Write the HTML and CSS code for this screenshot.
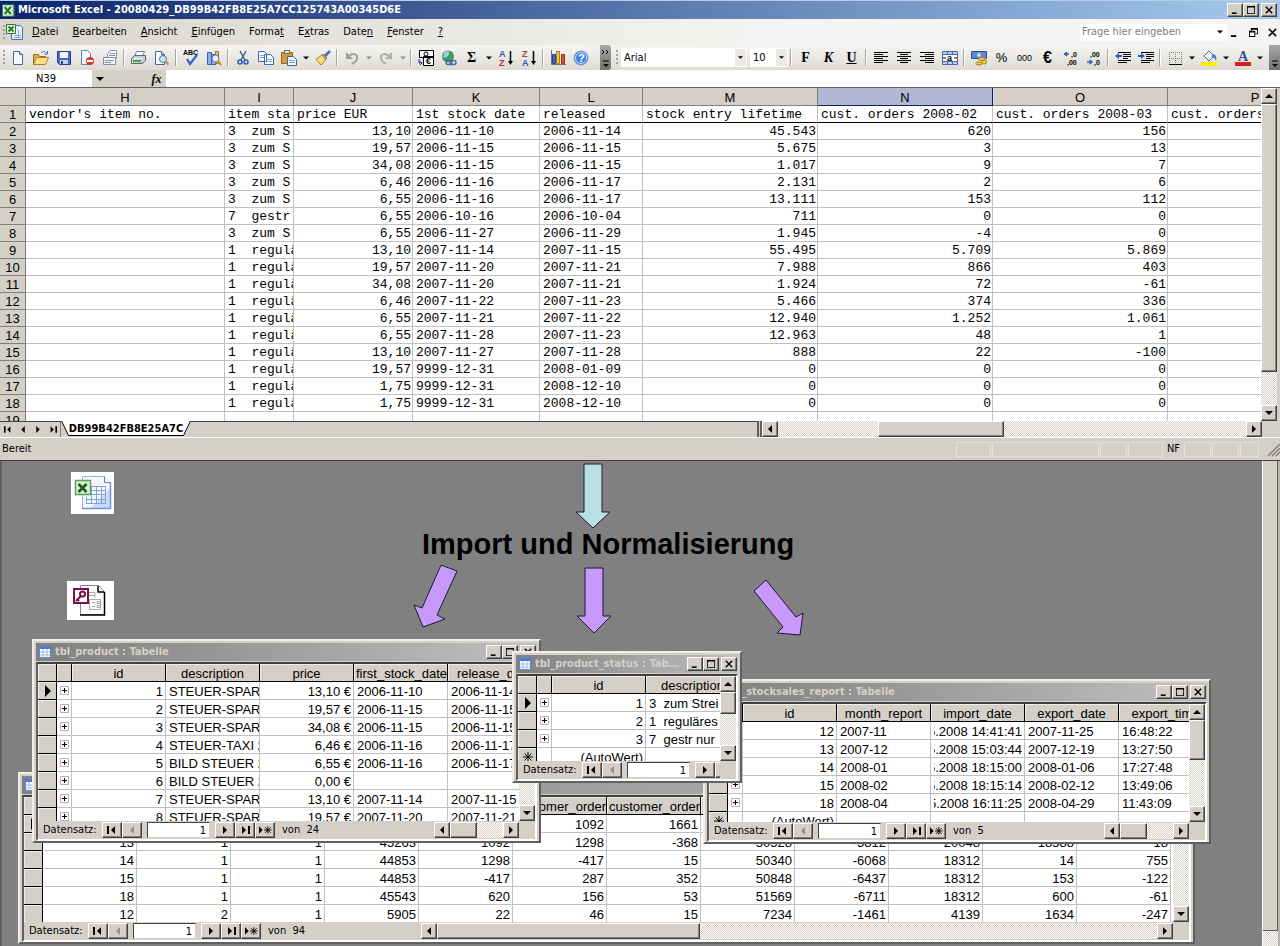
FILE: index.html
```html
<!DOCTYPE html>
<html lang="de">
<head>
<meta charset="utf-8">
<title>Microsoft Excel - 20080429_DB99B42FB8E25A7CC125743A00345D6E</title>
<link rel="stylesheet" href="styles.css">
</head>
<body>
<svg class="defs" aria-hidden="true">
  <symbol id="up" viewBox="0 0 8 8"><path d="M0 6h8L4 2z"/></symbol>
  <symbol id="down" viewBox="0 0 8 8"><path d="M0 2h8L4 6z"/></symbol>
  <symbol id="left" viewBox="0 0 8 8"><path d="M6 0v8L2 4z"/></symbol>
  <symbol id="right" viewBox="0 0 8 8"><path d="M2 0v8l4-4z"/></symbol>
  <symbol id="first" viewBox="0 0 10 8"><path d="M0 0h2v8H0zM8 0v8L4 4z"/></symbol>
  <symbol id="last" viewBox="0 0 10 8"><path d="M8 0h2v8H8zM2 0v8l4-4z"/></symbol>
  <symbol id="new" viewBox="0 0 14 8"><path d="M0 0v8l4-4z"/><path d="M9.500 0v8M5.500 4h8M6.500 1l6 6M12.500 1l-6 6" stroke="#000" fill="none"/></symbol>
  <symbol id="cur" viewBox="0 0 8 12"><path d="M1 0v12l6-6z"/></symbol>
  <symbol id="star" viewBox="0 0 10 10"><path d="M5 0v10M0 5h10M1.500 1.500l7 7M8.500 1.500l-7 7" stroke="#000" fill="none"/></symbol>
  <symbol id="min" viewBox="0 0 10 10"><path d="M1 8h6v2H1z"/></symbol>
  <symbol id="max" viewBox="0 0 10 10"><path d="M0 0h10v10H0zM1 2v7h8V2z" fill-rule="evenodd"/></symbol>
  <symbol id="restore" viewBox="0 0 10 10"><path d="M2 0h8v7H7v3H0V3h2zM3 2v1h4v3h2V2zM1 5v4h5V5z" fill-rule="evenodd"/></symbol>
  <symbol id="close" viewBox="0 0 10 10"><path d="M1 1l8 8M9 1l-8 8" stroke="#000" stroke-width="1.700"/></symbol>
  <symbol id="table" viewBox="0 0 12 12"><path fill="#fff" stroke="#5b84d0" d="M.5.5h11v11H.5z"/><path fill="#4c7be0" d="M0 0h12v3H0z"/><path d="M4 3v9M8 3v9M1 6h10M1 9h10" stroke="#9db9ea"/></symbol>
  <symbol id="plus" viewBox="0 0 9 9"><path fill="#fff" stroke="#b4b4b4" d="M.5.5h8v8h-8z"/><path d="M4.500 2v5M2 4.500h5" stroke="#000"/></symbol>
  <symbol id="xl" viewBox="0 0 16 16"><path fill="#e6f3e2" stroke="#2d7a33" d="M.5 1.500h13v13H.5z"/><path d="M3 4l7 8M10 4l-7 8" stroke="#1d7a2a" stroke-width="2.400"/><path d="M11 4h4M11 8h4M11 12h4" stroke="#79a87c"/></symbol>
  <symbol id="page" viewBox="0 0 16 16"><path fill="#f4f8ff" stroke="#4a6a94" d="M3.500 1.500h6l3 3v10h-9z"/><path fill="#c4d7f0" stroke="#4a6a94" d="M9.500 1.500v3h3"/></symbol>
</svg>

<main class="page">
<section class="excel">
  <header class="titlebar">
    <svg width="14" height="15"><use href="#xl"/></svg>
    <span class="title">Microsoft Excel - 20080429_DB99B42FB8E25A7CC125743A00345D6E</span>
    <div class="winbtns"><button class="raised" aria-label="Minimieren"><svg><use href="#min"/></svg></button><button class="raised" aria-label="Maximieren"><svg><use href="#max"/></svg></button><button class="raised" aria-label="Schließen"><svg><use href="#close"/></svg></button></div>
  </header>

  <nav class="menubar">
    <span class="grip"></span>
    <svg class="menu-icon" width="18" height="17" viewBox="0 0 18 17"><path fill="#e9f1ff" stroke="#4a6fb0" d="M5.500 1.500h9l2 2v12h-11z"/><path d="M8 11.500h7M8 13.500h7M12.500 6v8" stroke="#86a5d8"/><path fill="#e6f3e2" stroke="#2d7a33" d="M.5.5h9v9h-9z"/><path d="M2.500 2.500l5 5M7.500 2.500l-5 5" stroke="#1d7a2a" stroke-width="1.800"/></svg>
    <button><u>D</u>atei</button><button><u>B</u>earbeiten</button><button><u>A</u>nsicht</button><button><u>E</u>infügen</button><button>Forma<u>t</u></button><button>E<u>x</u>tras</button><button>Date<u>n</u></button><button><u>F</u>enster</button><button><u>?</u></button>
    <div class="ask"><input type="text" placeholder="Frage hier eingeben" aria-label="Frage hier eingeben"><svg><use href="#down"/></svg></div>
    <div class="docbtns"><button aria-label="Mappe minimieren"><svg><use href="#min"/></svg></button><button aria-label="Mappe wiederherstellen"><svg><use href="#restore"/></svg></button><button aria-label="Mappe schließen"><svg><use href="#close"/></svg></button></div>
  </nav>

  <div class="toolbar" role="toolbar" aria-label="Standard und Format">
    <span class="grip"></span>
    <button aria-label="Neu"><svg viewBox="0 0 16 16"><use href="#page"/></svg></button>
    <button aria-label="Öffnen"><svg viewBox="0 0 16 16"><path fill="#e8b23c" stroke="#9a6d14" d="M.5 14.500v-10h5l1 2h6v2"/><path fill="#ffe08a" stroke="#b07f1c" d="M.5 14.500l3-7h12l-3 7z"/><path d="M8 3c2-2 4-2 5 0M14.500 1v3h-3" fill="none" stroke="#3c68b0"/></svg></button>
    <button aria-label="Speichern"><svg viewBox="0 0 16 16"><path fill="#4b68c8" stroke="#27408f" d="M1.500 1.500h13v13h-11l-2-2z"/><path fill="#f4f6ff" d="M4 2h8v6H4z"/><path fill="#c9d0e8" d="M4 10h8v4H4z"/><path fill="#27408f" d="M5 11h2v3H5z"/></svg></button>
    <button aria-label="Berechtigung"><svg viewBox="0 0 16 16"><path fill="#f4f8ff" stroke="#6b7f9e" d="M2.500.5h6l3 3v11h-9z"/><circle cx="11" cy="11" r="4" fill="#d63a24"/><path fill="#fff" d="M8 10h6v2H8z"/></svg></button>
    <button aria-label="E-Mail"><svg viewBox="0 0 16 16"><path fill="#fff" stroke="#8090a8" d="M5.500 4.500l3-4h6v8h-9z"/><path fill="#f2f4f8" stroke="#8090a8" d="M1.500 7.500h12v7h-12z"/><path d="M8 3.500h5M7 5.500h6M3 10.500h9M3 12.500h6" stroke="#8090a8" fill="none"/></svg></button>
    <i class="sep"></i>
    <button aria-label="Drucken"><svg viewBox="0 0 16 16"><path fill="#fff" stroke="#6b7f9e" d="M5.500 1.500h8l-2 5h-8z"/><path fill="#c6ceda" stroke="#56657c" d="M.5 8.500l3-3h11v5l-3 3H.5z"/><path fill="#4faf4a" d="M2 10h8v2H2z"/><path fill="#eef2f8" d="M3 8h9v1H3z"/></svg></button>
    <button aria-label="Seitenansicht"><svg viewBox="0 0 16 16"><use href="#page" x="-2"/><circle cx="9" cy="9" r="3.500" fill="#cfe4fa" stroke="#55749e"/><path d="M11.500 11.500l3 3" stroke="#c48a2c" stroke-width="2"/></svg></button>
    <i class="sep"></i>
    <button aria-label="Rechtschreibung"><svg viewBox="0 0 16 16"><text x="0" y="5" class="t7">ABC</text><path d="M4 9l3 5 7-9" fill="none" stroke="#3567c6" stroke-width="2.200"/></svg></button>
    <button aria-label="Recherchieren"><svg viewBox="0 0 16 16"><path fill="#8eaee6" stroke="#3c5ea8" d="M1.500 2.500h4v12h-4zM5.500 4.500h4v10h-4z"/><path fill="#e4c06c" stroke="#9a7420" d="M9.500 1.500h3v12h-3z"/><circle cx="9.500" cy="8.500" r="3.500" fill="#e3efff" stroke="#55749e"/><path d="M12 11l3 4" stroke="#c48a2c" stroke-width="2"/></svg></button>
    <i class="sep"></i>
    <button aria-label="Ausschneiden"><svg viewBox="0 0 16 16"><path d="M5 1l5 9M11 1l-5 9" stroke="#44608e" stroke-width="1.500"/><circle cx="5" cy="12" r="2" fill="none" stroke="#2c5cb8" stroke-width="1.600"/><circle cx="11" cy="12" r="2" fill="none" stroke="#2c5cb8" stroke-width="1.600"/></svg></button>
    <button aria-label="Kopieren"><svg viewBox="0 0 16 16"><path fill="#f4f8ff" stroke="#3f66ae" d="M.5 1.500h6l2 2v8h-8zM6.500 4.500h6l3 3v7h-9z"/><path d="M2 5.500h4M2 7.500h4M8 9.500h6M8 11.500h6" stroke="#7f9fd6"/></svg></button>
    <button aria-label="Einfügen"><svg viewBox="0 0 16 16"><path fill="#d99a36" stroke="#94631a" d="M.5 2.500h11v11H.5z"/><path fill="#e4e4e4" stroke="#6a6a6a" d="M3.500.5h5v3h-5z"/><path fill="#f4f8ff" stroke="#3f66ae" d="M6.500 6.500h6l3 3v6h-9z"/><path d="M8 10.500h6M8 12.500h6" stroke="#7f9fd6"/></svg></button>
    <button class="drop" aria-label="Einfügeoptionen"><svg><use href="#down"/></svg></button>
    <button aria-label="Format übertragen"><svg viewBox="0 0 16 16"><path d="M15 1l-5 5" stroke="#4c6fb4" stroke-width="2.600"/><path fill="#a9a9c4" stroke="#6a6a8c" d="M8 4l4 4-2 1-3-3z"/><path fill="#f6dc7c" stroke="#a98a2c" d="M7 5l4 5-5 5-5-6z"/></svg></button>
    <i class="sep"></i>
    <button aria-label="Rückgängig"><svg viewBox="0 0 16 16"><path d="M4 7c4-5 10-3 9 1 0 3-2 4-5 6" fill="none" stroke="#a0a0a0" stroke-width="2"/><path fill="#a0a0a0" d="M2 2v7h7z"/></svg></button>
    <button class="drop dim" aria-label="Rückgängig-Liste"><svg><use href="#down"/></svg></button>
    <button aria-label="Wiederholen"><svg viewBox="0 0 16 16"><path d="M12 7c-4-5-10-3-9 1 0 3 2 4 5 6" fill="none" stroke="#b0b0b0" stroke-width="2"/><path fill="#b0b0b0" d="M14 2v7H7z"/></svg></button>
    <button class="drop dim" aria-label="Wiederholen-Liste"><svg><use href="#down"/></svg></button>
    <i class="sep"></i>
    <button aria-label="Euro umrechnen"><svg viewBox="0 0 16 16"><path fill="#fff" stroke="#000" d="M1.500.5h14v7h-14zM5.500 6.500h10v9h-10z"/><circle cx="8" cy="4" r="2" fill="none" stroke="#000"/><text x="8" y="14" class="t9">€</text><path d="M1 9v4h3M2 11l2 2-2 2" fill="none" stroke="#1c2fa0"/></svg></button>
    <button aria-label="Hyperlink"><svg viewBox="0 0 16 16"><circle cx="7" cy="6.500" r="6" fill="#3f9c5c"/><path fill="#8fd0e8" d="M3 3c3-3 6-2 5 1S4 8 2 8z"/><path d="M5 12.500a2 2 0 0 1 2-2h2a2 2 0 0 1 0 4H7a2 2 0 0 1-2-2zM9 12.500a2 2 0 0 1 2-2h2a2 2 0 0 1 0 4h-2a2 2 0 0 1-2-2z" fill="none" stroke="#4668a8" stroke-width="1.400"/></svg></button>
    <button class="serif" aria-label="AutoSumme">Σ</button>
    <button class="drop" aria-label="Summenoptionen"><svg><use href="#down"/></svg></button>
    <button aria-label="Aufsteigend sortieren"><svg viewBox="0 0 16 16"><text x="1" y="7" class="t9" fill="#2c5cb8">A</text><text x="1" y="16" class="t9" fill="#b03a2c">Z</text><path d="M12.500 1v12" stroke="#000" stroke-width="1.500"/><path d="M10 11h5l-2.500 4z"/></svg></button>
    <button aria-label="Absteigend sortieren"><svg viewBox="0 0 16 16"><text x="1" y="7" class="t9" fill="#b03a2c">Z</text><text x="1" y="16" class="t9" fill="#2c5cb8">A</text><path d="M12.500 1v12" stroke="#000" stroke-width="1.500"/><path d="M10 11h5l-2.500 4z"/></svg></button>
    <i class="sep"></i>
    <button aria-label="Diagramm"><svg viewBox="0 0 16 16"><path d="M1.500 0v14.500H16" fill="none" stroke="#707070"/><path fill="#3c6ed0" stroke="#27408f" d="M2.500 4.500h3v9h-3z"/><path fill="#f4c63c" stroke="#a97c14" d="M6.500 1.500h3v12h-3z"/><path fill="#e0502c" stroke="#94301a" d="M11.500 4.500h3v9h-3z"/></svg></button>
    <button aria-label="Hilfe"><svg viewBox="0 0 16 16"><circle cx="8" cy="8" r="7" fill="#3f7fe0" stroke="#7f9fd6"/><circle cx="8" cy="8" r="5.500" fill="none" stroke="#cfe0fa"/><text x="5" y="12" class="t11" fill="#fff">?</text></svg></button>
    <button class="cap" aria-label="Symbolleistenoptionen"><svg viewBox="0 0 11 25"><path d="M2 5l2 2-2 2M6 5l2 2-2 2M3 16h6" stroke="#000" fill="none"/><path d="M3 19h6l-3 3z"/></svg></button>
    <span class="grip"></span>
    <label class="combo font"><select aria-label="Schriftart"><option>Arial</option></select><svg><use href="#down"/></svg></label>
    <label class="combo size"><select aria-label="Schriftgrad"><option>10</option></select><svg><use href="#down"/></svg></label>
    <i class="sep"></i>
    <button class="serif" aria-label="Fett">F</button>
    <button class="serif" aria-label="Kursiv"><em>K</em></button>
    <button class="serif" aria-label="Unterstrichen"><u>U</u></button>
    <i class="sep"></i>
    <button aria-label="Linksbündig"><svg viewBox="0 0 16 16"><path d="M1 2.500h14M1 4.500h9M1 6.500h14M1 8.500h9M1 10.500h14M1 12.500h9" stroke="#000"/></svg></button>
    <button aria-label="Zentriert"><svg viewBox="0 0 16 16"><path d="M1 2.500h14M4 4.500h8M1 6.500h14M4 8.500h8M1 10.500h14M4 12.500h8" stroke="#000"/></svg></button>
    <button aria-label="Rechtsbündig"><svg viewBox="0 0 16 16"><path d="M1 2.500h14M6 4.500h9M1 6.500h14M6 8.500h9M1 10.500h14M6 12.500h9" stroke="#000"/></svg></button>
    <button aria-label="Verbinden und zentrieren"><svg viewBox="0 0 16 16"><path fill="#bcd0f0" stroke="#4668a8" d="M.5 1.500h15v13H.5z"/><path d="M5.500 1v4M10.500 1v4M5.500 11v4M10.500 11v4" stroke="#4668a8"/><path fill="#fff" stroke="#4668a8" d="M.5 4.500h15v7H.5z"/><text x="5" y="11" class="t9">a</text><path d="M1 8h3M12 8h3" stroke="#000"/></svg></button>
    <i class="sep"></i>
    <button aria-label="Währung"><svg viewBox="0 0 16 16"><path fill="#5f86d8" stroke="#2c4c9c" d="M.5 1.500h15v7H.5z"/><circle cx="8" cy="5" r="2" fill="#c8daf8"/><ellipse cx="11" cy="9" rx="3.500" ry="1.500" fill="#f6d05c" stroke="#a97c14"/><ellipse cx="13" cy="12" rx="2.500" ry="2" fill="#f6d05c" stroke="#a97c14"/><ellipse cx="8" cy="13.500" rx="3" ry="1.500" fill="#f6d05c" stroke="#a97c14"/></svg></button>
    <button class="percent" aria-label="Prozent">%</button>
    <button class="zeros" aria-label="Tausendertrennzeichen">000</button>
    <button class="euro" aria-label="Euro">€</button>
    <button aria-label="Dezimalstelle hinzufügen"><svg viewBox="0 0 16 16"><path d="M1 4h5M4 2L1.500 4 4 6" fill="none" stroke="#2c5cb8" stroke-width="1.300"/><text x="8" y="7" class="t8">,0</text><text x="4" y="15" class="t8">,00</text></svg></button>
    <button aria-label="Dezimalstelle löschen"><svg viewBox="0 0 16 16"><text x="4" y="7" class="t8">,00</text><path d="M1 12h5M3.500 10L6 12l-2.500 2" fill="none" stroke="#2c5cb8" stroke-width="1.300"/><text x="8" y="15" class="t8">,0</text></svg></button>
    <i class="sep"></i>
    <button aria-label="Einzug verkleinern"><svg viewBox="0 0 16 16"><path d="M3 2.500h13M8 4.500h8M8 6.500h8M8 8.500h5M3 10.500h13M3 12.500h9" stroke="#000"/><path fill="#2c5cb8" d="M0 6l4-3v2h3v2H4v2z"/></svg></button>
    <button aria-label="Einzug vergrößern"><svg viewBox="0 0 16 16"><path d="M3 2.500h13M8 4.500h8M8 6.500h8M8 8.500h5M3 10.500h13M3 12.500h9" stroke="#000"/><path fill="#2c5cb8" d="M7 6L3 3v2H0v2h3v2z"/></svg></button>
    <i class="sep"></i>
    <button aria-label="Rahmen"><svg viewBox="0 0 16 16"><path d="M2.500 2v12M8.500 2v12M14.500 2v12M2 2.500h13M2 8.500h13" stroke="#777" stroke-dasharray="1 1"/><path d="M2 14.500h13" stroke="#000"/></svg></button>
    <button class="drop" aria-label="Rahmenoptionen"><svg><use href="#down"/></svg></button>
    <button aria-label="Füllfarbe"><svg viewBox="0 0 16 16"><path fill="#f0f4fc" stroke="#56657c" d="M3 6l5-5 5 5-5 5z"/><path fill="#4c7bd0" d="M11 4c4 0 5 3 4 7-1-3-2-3-4-4z"/><path fill="#f8f000" d="M0 12h16v4H0z"/></svg></button>
    <button class="drop" aria-label="Füllfarbenpalette"><svg><use href="#down"/></svg></button>
    <button aria-label="Schriftfarbe"><svg viewBox="0 0 16 16"><text x="3" y="11" class="t14" fill="#2c4c9c">A</text><path fill="#e01818" d="M0 12h16v4H0z"/></svg></button>
    <button class="drop" aria-label="Schriftfarbenpalette"><svg><use href="#down"/></svg></button>
    <button class="cap end" aria-label="Weitere Schaltflächen"><svg viewBox="0 0 11 25"><path d="M3 16h6" stroke="#000"/><path d="M3 19h6l-3 3z"/></svg></button>
  </div>

  <div class="formulabar">
    <input class="namebox" type="text" value="N39" aria-label="Namenfeld">
    <svg><use href="#down"/></svg>
    <em class="fx">fx</em>
    <input class="formula" type="text" aria-label="Bearbeitungsleiste">
  </div>

  <div class="sheet">
    <div class="grid">
      <table>
        <colgroup><col class="w26"><col class="w199"><col class="w69"><col class="w119"><col class="w127"><col class="w103"><col class="w175"><col class="w175"><col class="w175"><col class="w175"></colgroup>
        <thead><tr><th><th>H<th>I<th>J<th>K<th>L<th>M<th class="sel">N<th>O<th>P</tr></thead>
        <tbody>
        <tr class="names"><th>1<td>vendor's item no.<td>item sta<td>price EUR<td>1st stock date<td>released<td>stock entry lifetime<td>cust. orders 2008-02<td>cust. orders 2008-03<td>cust. orders</tr>
        <tr><th>2<td><td>3  zum S<td>13,10<td>2006-11-10<td>2006-11-14<td>45.543<td>620<td>156<td></tr>
        <tr><th>3<td><td>3  zum S<td>19,57<td>2006-11-15<td>2006-11-15<td>5.675<td>3<td>13<td></tr>
        <tr><th>4<td><td>3  zum S<td>34,08<td>2006-11-15<td>2006-11-15<td>1.017<td>9<td>7<td></tr>
        <tr><th>5<td><td>3  zum S<td>6,46<td>2006-11-16<td>2006-11-17<td>2.131<td>2<td>6<td></tr>
        <tr><th>6<td><td>3  zum S<td>6,55<td>2006-11-16<td>2006-11-17<td>13.111<td>153<td>112<td></tr>
        <tr><th>7<td><td>7  gestr<td>6,55<td>2006-10-16<td>2006-10-04<td>711<td>0<td>0<td></tr>
        <tr><th>8<td><td>3  zum S<td>6,55<td>2006-11-27<td>2006-11-29<td>1.945<td>-4<td>0<td></tr>
        <tr><th>9<td><td>1  regulä<td>13,10<td>2007-11-14<td>2007-11-15<td>55.495<td>5.709<td>5.869<td></tr>
        <tr><th>10<td><td>1  regulä<td>19,57<td>2007-11-20<td>2007-11-21<td>7.988<td>866<td>403<td></tr>
        <tr><th>11<td><td>1  regulä<td>34,08<td>2007-11-20<td>2007-11-21<td>1.924<td>72<td>-61<td></tr>
        <tr><th>12<td><td>1  regulä<td>6,46<td>2007-11-22<td>2007-11-23<td>5.466<td>374<td>336<td></tr>
        <tr><th>13<td><td>1  regulä<td>6,55<td>2007-11-21<td>2007-11-22<td>12.940<td>1.252<td>1.061<td></tr>
        <tr><th>14<td><td>1  regulä<td>6,55<td>2007-11-28<td>2007-11-23<td>12.963<td>48<td>1<td></tr>
        <tr><th>15<td><td>1  regulä<td>13,10<td>2007-11-27<td>2007-11-28<td>888<td>22<td>-100<td></tr>
        <tr><th>16<td><td>1  regulä<td>19,57<td>9999-12-31<td>2008-01-09<td>0<td>0<td>0<td></tr>
        <tr><th>17<td><td>1  regulä<td>1,75<td>9999-12-31<td>2008-12-10<td>0<td>0<td>0<td></tr>
        <tr><th>18<td><td>1  regulä<td>1,75<td>9999-12-31<td>2008-12-10<td>0<td>0<td>0<td></tr>
        <tr><th>19<td><td><td><td><td><td><td><td><td><td></tr>
        </tbody>
      </table>
    </div>
    <div class="vscroll"><button class="raised" aria-label="Nach oben"><svg><use href="#up"/></svg></button><div class="track"><div class="raised thumb-v268"></div></div><button class="raised" aria-label="Nach unten"><svg><use href="#down"/></svg></button></div>
  </div>

  <div class="tabbar">
    <div class="tabnav"><button aria-label="Erstes Blatt"><svg><use href="#first"/></svg></button><button aria-label="Voriges Blatt"><svg><use href="#left"/></svg></button><button aria-label="Nächstes Blatt"><svg><use href="#right"/></svg></button><button aria-label="Letztes Blatt"><svg><use href="#last"/></svg></button></div>
    <button class="tab"><svg viewBox="0 0 130 16" preserveAspectRatio="none"><path fill="#fff" d="M0 0h130l-7 14H7z"/><path d="M.5 0l7 14.500h115L129.500 0" fill="none" stroke="#000"/></svg><span>DB99B42FB8E25A7C</span></button>
    <div class="tabrest"></div>
    <div class="hscroll sheetscroll"><button class="raised" aria-label="Nach links"><svg><use href="#left"/></svg></button><div class="track"><div class="raised thumb-sheet"></div></div><button class="raised" aria-label="Nach rechts"><svg><use href="#right"/></svg></button></div>
  </div>

  <footer class="status"><span class="ready">Bereit</span><span class="pane w35"></span><span class="pane w107"></span><span class="pane w27"></span><span class="pane w35"></span><span class="pane plain">NF</span><span class="pane w27"></span><span class="pane w27"></span><span class="pane w19"></span>
    <svg width="14" height="16" viewBox="0 0 14 16"><path d="M2 15L14 3M6 15l8-8M10 15l4-4" stroke="#808080" stroke-width="1.500"/></svg></footer>
</section>

<section class="desk">
  <div class="canvas">
    <h1>Import und Normalisierung</h1>
    <svg class="arrows" viewBox="410 461 400 180" stroke="#201830"><path fill="#b9e0e4" d="M584 464h18v48h8l-17 16-17-16h8z"/><g fill="#c799fb"><path d="M585 568h18v48h8l-17 17-17-17h8z"/><path d="M441 565l16 6-20 44 8 4-22 8-9-22 8 3z"/><path d="M766 580l30 37 7-4-3 22-23-2 6-6-29-36z"/></g></svg>
    <svg class="tile xl-tile" viewBox="0 0 43 42"><path fill="#fff" d="M0 0h43v42H0z"/><path fill="#f3f8ff" stroke="#9db2d4" d="M11.500 4.500h22l6 6v26h-28z"/><path fill="#c4dafa" d="M20 36h19V16z"/><path fill="#fff" stroke="#5f7fb4" d="M33.500 4.500v6h6"/><path d="M11 36.500h28.500V11" stroke="#6f92cc" stroke-width="1.500" fill="none"/><path d="M20 14.500h14M20 18.500h14M20 22.500h14M15 27.500h19M15 31.500h19M20.500 14v18M25.500 14v18M30.500 14v18M34.500 14v18M15.500 25v7" stroke="#86a3d0" fill="none"/><path fill="#d8f0d0" stroke="#5fa05c" stroke-width="1.500" d="M4.500 8.500h15v14h-15z"/><path d="M7.500 12l8 8M15.500 12l-8 8" stroke="#1d5a2a" stroke-width="2.600"/></svg>
    <svg class="tile ac-tile" viewBox="0 0 47 39"><path fill="#fff" d="M0 0h47v39H0z"/><path fill="#fff" stroke="#888" d="M13.500 4.500h18l6 6v23h-24z"/><path fill="none" stroke="#000" stroke-width="1.500" d="M31 5v6h6M37.500 11v23H13"/><path d="M21 11.500h7v5M21 14.500h7M22.500 18.500h11v10h-11zM25 21.500h3M30 20.500h3v2h-3zM25 25.500h3M30 24.500h3v2h-3z" fill="none" stroke="#aaa"/><path fill="#fff" stroke="#7a0f4c" stroke-width="2" d="M7 8h14v14H7z"/><circle cx="15.500" cy="13" r="2.500" fill="#fff" stroke="#7a0f4c" stroke-width="2"/><path d="M14 15l-5 5M10 18l2 2" stroke="#7a0f4c" stroke-width="2"/></svg>

    <section class="win win-stock">
      <header><svg><use href="#table"/></svg></header>
      <div class="body">
        <div class="data"><div class="clip"><table class="num">
          <colgroup><col class="w19"><col class="w94"><col class="w94"><col class="w94"><col class="w94"><col class="w94"><col class="w94"><col class="w94"><col class="w94"><col class="w94"><col class="w94"><col class="w94"><col class="w94"></colgroup>
          <thead><tr><th><th><th><th><th><th><th class="lead">customer_orders<th class="lead">customer_orders<th><th><th><th><th></tr></thead>
          <tbody>
          <tr><th><svg class="cur"><use href="#cur"/></svg><td><td><td><td><td><td>1092<td>1661<td><td><td><td><td></tr>
          <tr><th><td>13<td>1<td>1<td>45263<td>1092<td>1298<td>-368<td>50528<td>-5812<td>20048<td>18588<td>18</tr>
          <tr><th><td>14<td>1<td>1<td>44853<td>1298<td>-417<td>15<td>50340<td>-6068<td>18312<td>14<td>755</tr>
          <tr><th><td>15<td>1<td>1<td>44853<td>-417<td>287<td>352<td>50848<td>-6437<td>18312<td>153<td>-122</tr>
          <tr><th><td>18<td>1<td>1<td>45543<td>620<td>156<td>53<td>51569<td>-6711<td>18312<td>600<td>-61</tr>
          <tr><th><td>12<td>2<td>1<td>5905<td>22<td>46<td>15<td>7234<td>-1461<td>4139<td>1634<td>-247</tr>
          </tbody></table></div>
          <div class="vscroll"><button class="raised" aria-label="Nach oben"><svg><use href="#up"/></svg></button><div class="track"></div><button class="raised" aria-label="Nach unten"><svg><use href="#down"/></svg></button></div></div>
        <div class="recbar"><div class="nav"><label for="r1">Datensatz:</label><button class="raised" aria-label="Erster"><svg><use href="#first"/></svg></button><button class="raised dim" aria-label="Voriger"><svg><use href="#left"/></svg></button><input id="r1" type="text" value="1"><button class="raised" aria-label="Nächster"><svg><use href="#right"/></svg></button><button class="raised" aria-label="Letzter"><svg><use href="#last"/></svg></button><button class="raised" aria-label="Neu"><svg class="wide"><use href="#new"/></svg></button><span>von  94</span></div>
          <div class="hscroll long"><button class="raised" aria-label="Nach links"><svg><use href="#left"/></svg></button><div class="track"><div class="raised thumb-long"></div></div><button class="raised" aria-label="Nach rechts"><svg><use href="#right"/></svg></button></div></div>
      </div>
    </section>

    <section class="win win-report">
      <header><svg><use href="#table"/></svg><span>tbl_stocksales_report : Tabelle</span><div class="winbtns"><button class="raised" aria-label="Minimieren"><svg><use href="#min"/></svg></button><button class="raised" aria-label="Maximieren"><svg><use href="#max"/></svg></button><button class="raised" aria-label="Schließen"><svg><use href="#close"/></svg></button></div></header>
      <div class="body">
        <div class="data"><div class="clip"><table>
          <colgroup><col class="w19"><col class="w15"><col class="w94"><col class="w94"><col class="w94"><col class="w94"><col class="w94"></colgroup>
          <thead><tr><th><th><th>id<th>month_report<th>import_date<th>export_date<th>export_time</tr></thead>
          <tbody>
          <tr><th><td><svg class="plus"><use href="#plus"/></svg><td class="r">12<td>2007-11<td><div class="tail">05.05.2008 14:41:41</div><td>2007-11-25<td>16:48:22</tr>
          <tr><th><td><svg class="plus"><use href="#plus"/></svg><td class="r">13<td>2007-12<td><div class="tail">05.05.2008 15:03:44</div><td>2007-12-19<td>13:27:50</tr>
          <tr><th><td><svg class="plus"><use href="#plus"/></svg><td class="r">14<td>2008-01<td><div class="tail">05.05.2008 18:15:00</div><td>2008-01-06<td>17:27:48</tr>
          <tr><th><td><svg class="plus"><use href="#plus"/></svg><td class="r">15<td>2008-02<td><div class="tail">05.05.2008 18:15:14</div><td>2008-02-12<td>13:49:06</tr>
          <tr><th><td><svg class="plus"><use href="#plus"/></svg><td class="r">18<td>2008-04<td><div class="tail">05.05.2008 16:11:25</div><td>2008-04-29<td>11:43:09</tr>
          <tr><th><svg class="star"><use href="#star"/></svg><td><td class="r">(AutoWert)<td><td><td><td></tr>
          </tbody></table></div>
          <div class="vscroll"><button class="raised" aria-label="Nach oben"><svg><use href="#up"/></svg></button><div class="track"><div class="raised thumb-v40"></div></div><button class="raised" aria-label="Nach unten"><svg><use href="#down"/></svg></button></div></div>
        <div class="recbar"><div class="nav"><label for="r2">Datensatz:</label><button class="raised" aria-label="Erster"><svg><use href="#first"/></svg></button><button class="raised dim" aria-label="Voriger"><svg><use href="#left"/></svg></button><input id="r2" type="text" value="1"><button class="raised" aria-label="Nächster"><svg><use href="#right"/></svg></button><button class="raised" aria-label="Letzter"><svg><use href="#last"/></svg></button><button class="raised" aria-label="Neu"><svg class="wide"><use href="#new"/></svg></button><span>von  5</span></div>
          <div class="hscroll short"><button class="raised" aria-label="Nach links"><svg><use href="#left"/></svg></button><div class="track"><div class="raised thumb-short"></div></div><button class="raised" aria-label="Nach rechts"><svg><use href="#right"/></svg></button></div></div>
      </div>
    </section>

    <section class="win win-product">
      <header><svg><use href="#table"/></svg><span>tbl_product : Tabelle</span><div class="winbtns"><button class="raised" aria-label="Minimieren"><svg><use href="#min"/></svg></button><button class="raised" aria-label="Maximieren"><svg><use href="#max"/></svg></button><button class="raised" aria-label="Schließen"><svg><use href="#close"/></svg></button></div></header>
      <div class="body">
        <div class="data"><div class="clip"><table>
          <colgroup><col class="w19"><col class="w15"><col class="w94"><col class="w94"><col class="w94"><col class="w94"><col class="w94"></colgroup>
          <thead><tr><th><th><th>id<th>description<th>price<th class="lead">first_stock_date<th>release_date</tr></thead>
          <tbody>
          <tr><th><svg class="cur"><use href="#cur"/></svg><td><svg class="plus"><use href="#plus"/></svg><td class="r">1<td>STEUER-SPAR<td class="r">13,10 €<td>2006-11-10<td>2006-11-14</tr>
          <tr><th><td><svg class="plus"><use href="#plus"/></svg><td class="r">2<td>STEUER-SPAR<td class="r">19,57 €<td>2006-11-15<td>2006-11-15</tr>
          <tr><th><td><svg class="plus"><use href="#plus"/></svg><td class="r">3<td>STEUER-SPAR<td class="r">34,08 €<td>2006-11-15<td>2006-11-15</tr>
          <tr><th><td><svg class="plus"><use href="#plus"/></svg><td class="r">4<td>STEUER-TAXI 2<td class="r">6,46 €<td>2006-11-16<td>2006-11-17</tr>
          <tr><th><td><svg class="plus"><use href="#plus"/></svg><td class="r">5<td>BILD STEUER 2<td class="r">6,55 €<td>2006-11-16<td>2006-11-17</tr>
          <tr><th><td><svg class="plus"><use href="#plus"/></svg><td class="r">6<td>BILD STEUER 2<td class="r">0,00 €<td><td></tr>
          <tr><th><td><svg class="plus"><use href="#plus"/></svg><td class="r">7<td>STEUER-SPAR<td class="r">13,10 €<td>2007-11-14<td>2007-11-15</tr>
          <tr><th><td><svg class="plus"><use href="#plus"/></svg><td class="r">8<td>STEUER-SPAR<td class="r">19,57 €<td>2007-11-20<td>2007-11-21</tr>
          </tbody></table></div>
          <div class="vscroll"><button class="raised" aria-label="Nach oben"><svg><use href="#up"/></svg></button><div class="track"><div class="raised thumb-v40"></div></div><button class="raised" aria-label="Nach unten"><svg><use href="#down"/></svg></button></div></div>
        <div class="recbar"><div class="nav"><label for="r3">Datensatz:</label><button class="raised" aria-label="Erster"><svg><use href="#first"/></svg></button><button class="raised dim" aria-label="Voriger"><svg><use href="#left"/></svg></button><input id="r3" type="text" value="1"><button class="raised" aria-label="Nächster"><svg><use href="#right"/></svg></button><button class="raised" aria-label="Letzter"><svg><use href="#last"/></svg></button><button class="raised" aria-label="Neu"><svg class="wide"><use href="#new"/></svg></button><span>von  24</span></div>
          <div class="hscroll short"><button class="raised" aria-label="Nach links"><svg><use href="#left"/></svg></button><div class="track"><div class="raised thumb-short"></div></div><button class="raised" aria-label="Nach rechts"><svg><use href="#right"/></svg></button></div></div>
      </div>
    </section>

    <section class="win win-status">
      <header><svg><use href="#table"/></svg><span>tbl_product_status : Tabelle</span><div class="winbtns"><button class="raised" aria-label="Minimieren"><svg><use href="#min"/></svg></button><button class="raised" aria-label="Maximieren"><svg><use href="#max"/></svg></button><button class="raised" aria-label="Schließen"><svg><use href="#close"/></svg></button></div></header>
      <div class="body">
        <div class="data"><div class="clip"><table>
          <colgroup><col class="w19"><col class="w15"><col class="w94"><col class="w94"></colgroup>
          <thead><tr><th><th><th>id<th>description</tr></thead>
          <tbody>
          <tr><th><svg class="cur"><use href="#cur"/></svg><td><svg class="plus"><use href="#plus"/></svg><td class="r">1<td>3  zum Strei</tr>
          <tr><th><td><svg class="plus"><use href="#plus"/></svg><td class="r">2<td>1  reguläres</tr>
          <tr><th><td><svg class="plus"><use href="#plus"/></svg><td class="r">3<td>7  gestr nur</tr>
          <tr><th><svg class="star"><use href="#star"/></svg><td><td class="r">(AutoWert)<td></tr>
          </tbody></table></div>
          <div class="vscroll"><button class="raised" aria-label="Nach oben"><svg><use href="#up"/></svg></button><div class="track"><div class="raised thumb-v22"></div></div><button class="raised" aria-label="Nach unten"><svg><use href="#down"/></svg></button></div></div>
        <div class="recbar"><div class="nav"><label for="r4">Datensatz:</label><button class="raised" aria-label="Erster"><svg><use href="#first"/></svg></button><button class="raised dim" aria-label="Voriger"><svg><use href="#left"/></svg></button><input id="r4" type="text" value="1"><button class="raised" aria-label="Nächster"><svg><use href="#right"/></svg></button><button class="raised" aria-label="Letzter"><svg><use href="#last"/></svg></button></div></div>
      </div>
    </section>
  </div>
  <div class="deskscroll"><div class="deskthumb"></div></div>
</section>
</main>
</body>
</html>
```
FILE: styles.css
```css
* { box-sizing: border-box; }
body { margin: 0; font: 11px/14px "DejaVu Sans Condensed", "Liberation Sans", sans-serif; color: #000; background: #d4d0c8; }
button, input, select { font: inherit; color: inherit; margin: 0; padding: 0; border: 0; background: none; border-radius: 0; outline: 0; }
button { display: flex; align-items: center; justify-content: center; flex: none; }
svg { flex: none; display: block; overflow: visible; }
.defs { position: absolute; width: 0; height: 0; }
.page { display: flex; flex-direction: column; height: 100vh; min-height: 700px; overflow: hidden; }

.raised { background: #d4d0c8; border: 1px solid; border-color: #fff #404040 #404040 #fff; box-shadow: inset -1px -1px #808080; }
.raised svg { width: 8px; height: 8px; }
.dim svg { fill: #909090; }

.titlebar { display: flex; align-items: center; height: 19px; border-top: 1px solid #b8cce4; padding: 0 3px 0 2px; gap: 2px; background: linear-gradient(90deg, #0a246a, #a6caf0); }
.title { flex: 1; color: #fff; font-weight: bold; white-space: nowrap; overflow: hidden; }
.winbtns { display: flex; margin-left: auto; }
.winbtns button { width: 16px; height: 14px; }
.winbtns button:last-child { margin-left: 2px; }

.menubar { display: flex; align-items: center; height: 26px; background: linear-gradient(90deg, #d9d5cd, #f5f4f2 60%); padding-left: 3px; }
.menubar > button { padding: 0 7px; display: block; }
.menu-icon { margin: 0 1px 0 1px; }
.grip { width: 2px; height: 15px; flex: none; background: repeating-linear-gradient(#a8a49c 0 2px, transparent 2px 4px); }
.ask { display: flex; align-items: center; width: 147px; height: 17px; margin-left: auto; background: #fff; padding: 0 2px; color: #808080; }
.ask input { flex: 1; min-width: 0; }
.ask input::placeholder { color: #808080; opacity: 1; }
.ask svg { width: 6px; height: 6px; fill: #000; margin-right: 2px; }
.docbtns { display: flex; padding: 0 2px; gap: 8px; }
.docbtns svg { width: 9px; height: 9px; }
.docbtns button { width: 11px; }

.toolbar { display: flex; align-items: center; height: 25px; padding-left: 3px; background: linear-gradient(#f6f5f3, #dedbd4); overflow: hidden; }
.toolbar > button { width: 23px; height: 23px; }
.toolbar > .grip + button { margin-left: 1px; }
.toolbar > button svg { width: 16px; height: 16px; }
.toolbar > .drop { width: 11px; }
.toolbar > .drop svg { width: 6px; height: 6px; }
.sep { width: 6px; flex: none; height: 17px; background: linear-gradient(90deg, transparent 2px, #a8a49c 2px 3px, #fff 3px 4px, transparent 4px); }
.toolbar > .cap { width: 11px; height: 25px; margin: 0 5px 0 8px; background: linear-gradient(#a8a8a8, #707070); border-radius: 0 3px 3px 0; }
.toolbar > .cap svg { width: 11px; height: 25px; }
.toolbar > .cap.end { margin: 0 0 0 auto; border-radius: 0; }
.combo { position: relative; flex: none; height: 19px; background: #fff; margin-left: 3px; }
.combo select { appearance: none; width: 100%; height: 19px; padding: 0 3px; }
.combo svg { position: absolute; right: 1px; top: 1px; width: 11px; height: 17px; padding: 3px; background: #ece9e4; }
.combo.font { width: 126px; }
.combo.size { width: 38px; }
.toolbar .serif { font: bold 14px/20px "Liberation Serif", serif; }
.toolbar .percent { font: 13px/16px "Liberation Sans", sans-serif; }
.toolbar .zeros { font: 9px/14px "Liberation Sans", sans-serif; }
.toolbar .euro { font: bold 16px/20px "Liberation Sans", sans-serif; }
.t7 { font: bold 7px "Liberation Sans", sans-serif; }
.t8 { font: bold 7px "Liberation Sans", sans-serif; }
.t9 { font: bold 9px "Liberation Sans", sans-serif; }
.t11 { font: bold 11px "Liberation Sans", sans-serif; }
.t14 { font: bold 14px "Liberation Serif", serif; }

.formulabar { display: flex; align-items: center; height: 18px; background: #d4d0c8; border-bottom: 1px solid #606060; }
.formulabar svg { width: 8px; height: 8px; margin-left: 4px; }
.namebox { width: 92px; height: 17px; background: #fff; text-align: center; }
.fx { width: 21px; margin-left: 41px; padding-left: 2px; text-align: center; font: italic bold 12px/16px "Liberation Serif", serif; }
.fx + .formula { flex: 1; height: 17px; background: #fff; }

.sheet { display: flex; height: 333px; padding-right: 3px; }
.grid { flex: 1; min-width: 0; overflow: hidden; background: #fff; }
table { border-collapse: separate; border-spacing: 0; table-layout: fixed; width: 1px; }
th, td { white-space: pre; overflow: hidden; font-weight: normal; text-align: left; }
.w15 { width: 15px; } .w19 { width: 19px; } .w26 { width: 26px; } .w69 { width: 69px; } .w94 { width: 94px; }
.w103 { width: 103px; } .w119 { width: 119px; } .w127 { width: 127px; } .w175 { width: 175px; } .w199 { width: 199px; }
.grid th { height: 17px; padding: 2px 0 0; border: solid #808080; border-width: 0 1px 1px 0; background: #d4d0c8; text-align: center; font: 13px/14px "Liberation Sans", sans-serif; }
.grid thead th { height: 18px; line-height: 15px; }
.grid .sel { background: #b0b8d4; border-color: #0a246a; }
.grid td { height: 17px; padding: 2px 1px 0 3px; border: solid #c0c0c0; border-width: 0 1px 1px 0; font: 13px/14px "Liberation Mono", monospace; }
.grid td:nth-child(4), .grid td:nth-child(n+7) { text-align: right; }
.grid .names td { text-align: left; border-bottom-color: #000; }

.vscroll { display: flex; flex-direction: column; width: 16px; flex: none; }
.vscroll button { width: 16px; height: 16px; }
.track { flex: 1; min-width: 0; min-height: 0; background: repeating-conic-gradient(#fff 0 25%, #d4d0c8 0 50%) 0 0 / 2px 2px; }
.hscroll { display: flex; height: 16px; flex: none; }
.hscroll button { width: 16px; height: 16px; }
.hscroll .track > div { height: 16px; }
.thumb-v268 { height: 268px; } .thumb-v40 { height: 40px; } .thumb-v22 { height: 22px; }
.thumb-sheet { width: 126px; margin-left: 100px; } .thumb-short { width: 27px; } .thumb-long { width: 263px; }

.tabbar { display: flex; height: 17px; padding-right: 18px; border-bottom: 1px solid #fff; }
.tabnav { display: flex; width: 61px; border-top: 1px solid #404040; border-right: 1px solid #808080; }
.tabnav button { width: 15px; }
.tabnav svg { width: 8px; height: 7px; }
.tab { position: relative; width: 130px; height: 16px; font-weight: bold; }
.tab svg { position: absolute; inset: 0; width: 100%; height: 100%; }
.tab span { position: relative; }
.tabrest { flex: 1; border-top: 1px solid #404040; }
.sheetscroll { width: 505px; border-left: 5px double #606060; }
.status { display: flex; align-items: center; height: 23px; gap: 1px; padding-left: 2px; border-bottom: 1px solid #404040; }
.ready { flex: 1; }
.pane { height: 15px; border: 1px solid #e4e0da; }
.plain { border: 0; padding: 0 3px; }
.w35 { width: 35px; } .w107 { width: 107px; } .w27 { width: 27px; }
.status .w19 { width: 19px; }
.status svg { margin-left: 6px; }

.desk { flex: 1; min-height: 0; display: flex; }
.canvas { flex: 1; min-width: 0; position: relative; overflow: hidden; background: #808080; box-shadow: inset 2px 0 #606060; }
.deskscroll { width: 18px; border-left: 1px solid #fff; border-right: 2px solid #b8b4ac; background: repeating-conic-gradient(#fff 0 25%, #d4d0c8 0 50%) 0 0 / 2px 2px; }
.deskthumb { height: 97%; background: #d4d0c8; border: solid #606060; border-width: 0 1px 1px 0; }
h1 { position: absolute; left: 422px; top: 66px; margin: 0; font: bold 29px/34px "Liberation Sans", sans-serif; white-space: nowrap; }
.arrows { position: absolute; left: 410px; top: 0; width: 400px; height: 180px; }
.tile { position: absolute; }
.xl-tile { left: 71px; top: 11px; width: 43px; height: 42px; }
.ac-tile { left: 67px; top: 120px; width: 47px; height: 39px; }

.win { position: absolute; display: flex; flex-direction: column; background: #d4d0c8; padding: 2px 2px 0; border: 2px solid; border-color: #f0eee8 #606060 #606060 #f0eee8; }
.win-stock { left: 18px; top: 311px; width: 1177px; height: 172px; }
.win-report { left: 703px; top: 218px; width: 508px; height: 165px; }
.win-product { left: 32px; top: 178px; width: 509px; height: 204px; }
.win-status { left: 512px; top: 190px; width: 230px; height: 132px; }
.win header { display: flex; align-items: center; height: 18px; flex: none; gap: 4px; padding: 0 1px 0 3px; margin-bottom: 1px; color: #d4d0c8; font-weight: bold; background: linear-gradient(90deg, #808080, #c0c0c0); }
.win header > svg { width: 12px; height: 12px; }
.win header > span { white-space: nowrap; overflow: hidden; text-overflow: ellipsis; }
.body { flex: 1; min-height: 0; display: flex; flex-direction: column; border: 2px solid; border-color: #404040 #fff #fff #606060; }
.data { flex: 1; min-height: 0; display: flex; }
.clip { flex: 1; min-width: 0; overflow: hidden; background: #fff; }
.win th, .win td { height: 18px; line-height: 15px; font-family: "Liberation Sans", sans-serif; font-size: 13px; padding: 2px 2px 0 3px; border: solid #c0c0c0; border-width: 0 1px 1px 0; }
.win th { background: #d4d0c8; border-color: #000; padding-left: 2px; text-align: center; box-shadow: inset 1px 1px #f0eee8; }
.win th.lead { text-align: left; }
.win td.r, .num td { text-align: right; }
.win th:first-child, .win td:has(.plus) { padding: 0; }
.tail { display: flex; justify-content: flex-end; overflow: hidden; }
.plus { width: 9px; height: 9px; margin: 0 0 1px 3px; }
.cur { width: 8px; height: 12px; margin-left: 6px; }
.star { width: 10px; height: 10px; margin-left: 5px; }
.recbar { display: flex; flex: none; height: 18px; padding: 1px 16px 1px 0; }
.nav { flex: 1; min-width: 0; display: flex; align-items: center; overflow: hidden; padding-left: 5px; white-space: pre; }
.nav label { width: 59px; flex: none; }
.nav button { width: 20px; height: 16px; }
.nav button svg { width: 10px; }
.nav button .wide { width: 13px; }
.nav input { width: 63px; flex: none; height: 16px; margin: 0 5px; padding-right: 3px; background: #fff; border: 1px solid; border-color: #404040 #d4d0c8 #d4d0c8 #404040; text-align: right; }
.nav span { margin-left: 7px; }
.short { width: 85px; }
.long { width: 752px; }
```
